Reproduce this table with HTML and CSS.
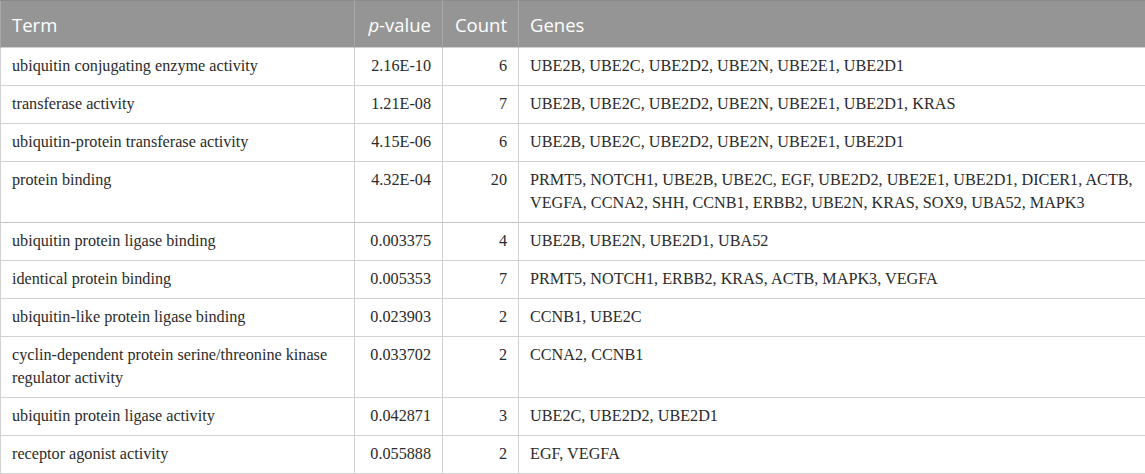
FILE: index.html
```html
<!DOCTYPE html>
<html lang="en">
<head>
<meta charset="utf-8">
<title>GO molecular function</title>
<link rel="stylesheet" href="styles.css">
</head>
<body>
<table class="go-table">
  <colgroup>
    <col class="c-term">
    <col class="c-p">
    <col class="c-count">
    <col class="c-genes">
  </colgroup>
  <thead>
    <tr>
      <th>Term</th>
      <th class="num"><span class="it">p</span>-value</th>
      <th class="num">Count</th>
      <th>Genes</th>
    </tr>
  </thead>
  <tbody>
    <tr><td>ubiquitin conjugating enzyme activity</td><td class="num">2.16E-10</td><td class="num">6</td><td>UBE2B, UBE2C, UBE2D2, UBE2N, UBE2E1, UBE2D1</td></tr>
    <tr><td>transferase activity</td><td class="num">1.21E-08</td><td class="num">7</td><td>UBE2B, UBE2C, UBE2D2, UBE2N, UBE2E1, UBE2D1, KRAS</td></tr>
    <tr><td>ubiquitin-protein transferase activity</td><td class="num">4.15E-06</td><td class="num">6</td><td>UBE2B, UBE2C, UBE2D2, UBE2N, UBE2E1, UBE2D1</td></tr>
    <tr class="strong"><td>protein binding</td><td class="num">4.32E-04</td><td class="num">20</td><td>PRMT5, NOTCH1, UBE2B, UBE2C, EGF, UBE2D2, UBE2E1, UBE2D1, DICER1, ACTB, VEGFA, CCNA2, SHH, CCNB1, ERBB2, UBE2N, KRAS, SOX9, UBA52, MAPK3</td></tr>
    <tr><td>ubiquitin protein ligase binding</td><td class="num">0.003375</td><td class="num">4</td><td>UBE2B, UBE2N, UBE2D1, UBA52</td></tr>
    <tr><td>identical protein binding</td><td class="num">0.005353</td><td class="num">7</td><td>PRMT5, NOTCH1, ERBB2, KRAS, ACTB, MAPK3, VEGFA</td></tr>
    <tr><td>ubiquitin-like protein ligase binding</td><td class="num">0.023903</td><td class="num">2</td><td>CCNB1, UBE2C</td></tr>
    <tr><td>cyclin-dependent protein serine/threonine kinase regulator activity</td><td class="num">0.033702</td><td class="num">2</td><td>CCNA2, CCNB1</td></tr>
    <tr><td>ubiquitin protein ligase activity</td><td class="num">0.042871</td><td class="num">3</td><td>UBE2C, UBE2D2, UBE2D1</td></tr>
    <tr><td>receptor agonist activity</td><td class="num">0.055888</td><td class="num">2</td><td>EGF, VEGFA</td></tr>
  </tbody>
</table>
</body>
</html>
```
FILE: styles.css
```css
html, body {
  margin: 0;
  padding: 0;
  background: #ffffff;
}

.go-table {
  width: 1145px;
  border-collapse: collapse;
  table-layout: fixed;
  font-family: "Liberation Serif", "Times New Roman", serif;
  font-size: 16.2px;
  color: #2b2b2b;
}

.c-term { width: 354px; }
.c-p { width: 88px; }
.c-count { width: 76px; }
.c-genes { width: 627px; }

.go-table th {
  background: #959595;
  color: #ffffff;
  font-family: "Open Sans", "Noto Sans", sans-serif;
  font-weight: 400;
  font-size: 18.5px;
  line-height: 23px;
  text-align: left;
  padding: 12px 11px 11px 11px;
  height: 23px;
  border-top: 1px solid #8a8a8a;
  border-left: 1px solid #a9a9a9;
  border-right: 1px solid #a9a9a9;
}

.go-table th.num {
  text-align: right;
}

.go-table .it {
  font-style: italic;
}

.go-table td {
  line-height: 23px;
  padding: 7px 11px 7px 11px;
  vertical-align: top;
  border: 1px solid #d2d2d2;
}

.go-table td.num {
  text-align: right;
}

.go-table tr.strong td {
  border-bottom-color: #c4c4c4;
}
```
